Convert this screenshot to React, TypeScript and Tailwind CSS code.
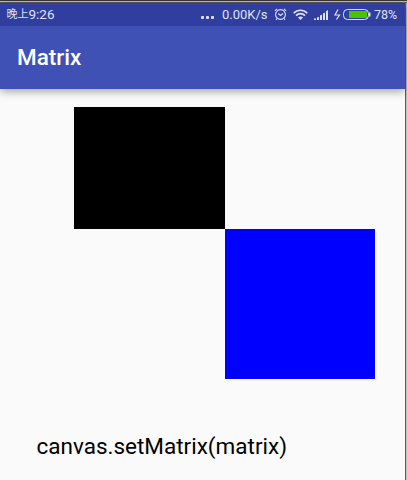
function AlarmIcon() {
  return (
    <svg width="13" height="13" viewBox="0 0 13 13" fill="none" stroke="#dfe1f1" strokeWidth="1.1">
      <circle cx="6.5" cy="6.500" r="4.900" />
      <path d="M4.3 5.500 6.5 7.500 9 5.500M.8 2.800 3.200.8M12.200 2.800 9.800.8M3 10.500l-1 1.300M10 10.500l1 1.300" />
    </svg>
  );
}

function WifiIcon() {
  return (
    <svg width="15" height="11" viewBox="0 0 15 11" fill="none" stroke="#dfe1f1" strokeWidth="1.6">
      <path d="M.7 4.3C4.5.3 10.5.3 14.3 4.3M3 6.6C5.500 4 9.500 4 12 6.6" />
      <path d="M5 8.500C6.500 7 8.500 7 10 8.500L7.500 11Z" fill="#dfe1f1" stroke="none" />
    </svg>
  );
}

function SignalIcon() {
  return (
    <svg width="15" height="10" viewBox="0 0 15 10" fill="#dfe1f1">
      <path d="M0 8.500h2V10H0zM3 7.500 5 7v3H3zM6 5.500 8 4.500V10H6zM9 3.500l2-1V10H9z" />
      <path d="M12 1.200 14 0v10h-2z" />
    </svg>
  );
}

function BoltIcon() {
  return (
    <svg width="7" height="11" viewBox="0 0 7 11" fill="none" stroke="#dfe1f1" strokeWidth="1.2">
      <path d="M4 .5 1 6h4.500L2.500 10.500" />
    </svg>
  );
}

function BatteryIcon() {
  return (
    <svg width="28" height="11" viewBox="0 0 28 11">
      <rect x=".5" y=".5" width="25" height="10" rx="4" fill="none" stroke="#dfe1f1" />
      <path d="M6 2h18v7H6z" fill="#48c400" />
      <path d="M26 3.500h1.500v4H26z" fill="#dfe1f1" />
    </svg>
  );
}

export default function App() {
  return (
    <div className="flex h-[480px] w-[407px] flex-col overflow-hidden bg-[#fafafa] font-['Roboto','Noto_Sans_CJK_SC',sans-serif]">
      <div className="h-px shrink-0 bg-[#3c3838]" />
      <div className="h-px shrink-0 bg-[#c9c6c6]" />
      <div className="h-px shrink-0 bg-[#5c5a60]" />
      <div className="flex min-h-0 flex-1 border-r border-[#bdbdbd]">
        <div className="flex flex-1 flex-col border-r border-[#5e5e5e]">
          <header className="shadow-[0_2px_9px_rgba(0,0,0,0.38)]">
            <div className="flex h-[23px] items-center bg-[#303f9f] pl-[6.5px] text-[13px] leading-[23px] text-[#dfe1f1]">
              <span className="flex whitespace-nowrap">
                <span className="text-[11px]">晚上</span>
                <span className="text-[13.5px]">9:26</span>
              </span>
              <span className="ml-auto mt-[5px] flex gap-[2px]">
                <i className="size-[3px] rounded-[1px] bg-[#dfe1f1]" />
                <i className="size-[3px] rounded-[1px] bg-[#dfe1f1]" />
                <i className="size-[3px] rounded-[1px] bg-[#dfe1f1]" />
              </span>
              <span className="ml-[8px] w-[45px] whitespace-nowrap">0.00K/s</span>
              <span className="ml-[7px]"><AlarmIcon /></span>
              <span className="ml-[6px]"><WifiIcon /></span>
              <span className="ml-[6px]"><SignalIcon /></span>
              <span className="ml-[5px]"><BoltIcon /></span>
              <span className="ml-[2px]"><BatteryIcon /></span>
              <span className="ml-[3px] mr-[7px] w-[24px] text-[12.5px]">78%</span>
            </div>
            <div className="flex h-[63px] items-center bg-[#3f51b5] pl-[17px] pt-px">
              <h1 className="text-[22.5px] font-medium text-white">Matrix</h1>
            </div>
          </header>
          <main>
            <div className="ml-[74px] mt-[18px] grid w-[301px] grid-cols-[151px_150px] grid-rows-[122px_150px]">
              <div className="bg-black" />
              <div className="col-start-2 row-start-2 bg-[#0000ff]" />
            </div>
            <p className="ml-[36.5px] mt-[49px] whitespace-nowrap text-[22.5px] leading-[36px] text-black">canvas.setMatrix(matrix)</p>
          </main>
        </div>
      </div>
    </div>
  );
}
